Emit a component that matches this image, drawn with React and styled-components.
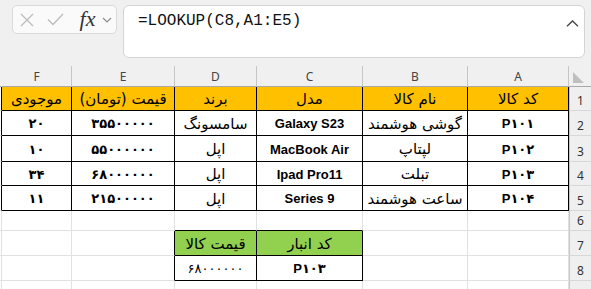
import styled, { createGlobalStyle } from "styled-components";

const GlobalStyle = createGlobalStyle`
  * { box-sizing: border-box; }
  body {
    margin: 0;
    background: #f0f0f0;
    overflow: hidden;
    font-family: "Liberation Sans", "DejaVu Sans", sans-serif;
  }
`;

const Page = styled.div`
  width: 591px;
  height: 289px;
  overflow: hidden;
  background: #f0f0f0;
`;

const TopBar = styled.div`
  height: 66px;
  display: flex;
  align-items: flex-start;
  gap: 6px;
  padding: 5px 6px 0 12px;
`;

const NameBox = styled.div`
  width: 105px;
  height: 29px;
  display: flex;
  align-items: center;
  padding-left: 6px;
  background: #fafafa;
  border: 1px solid #dadada;
  border-radius: 5px;
`;

const Slot = styled.div`
  width: ${(p) => p.$w}px;
  display: flex;
  justify-content: center;
  align-items: center;
`;

const Fx = styled.span`
  font-family: "Liberation Serif", serif;
  font-style: italic;
  font-size: 22px;
  line-height: 1;
  color: #333;
  margin-top: -2px;
`;

const FormulaBox = styled.div`
  flex: 1;
  height: 53px;
  display: flex;
  justify-content: space-between;
  align-items: flex-start;
  padding: 5px 5px 0 14px;
  background: #fff;
  border: 1px solid #d4d4d4;
  border-radius: 6px;
`;

const FormulaText = styled.div`
  font-family: "Liberation Mono", monospace;
  font-size: 16px;
  line-height: 20px;
  color: #111;
`;

const CollapseIcon = styled.svg`
  margin-top: 9px;
`;

const Sheet = styled.div`
  display: grid;
  grid-template-columns: 2px 70px 103px 82px 106px 105px 101px 22px;
  grid-template-rows: 21px 24px 25px 26px 24px 25px 20px 25px 25px 25px;
  direction: ltr;
`;

const ColHead = styled.div`
  display: flex;
  align-items: center;
  justify-content: center;
  background: #f0f0f0;
  border-right: 1px solid ${(p) => (p.$edge ? "transparent" : "#c6c6c6")};
  border-bottom: 1px solid #a8a8a8;
  font-family: "Noto Sans", sans-serif;
  font-size: 12px;
  color: #444;
`;

const Corner = styled.div`
  display: flex;
  align-items: flex-end;
  padding: 0 0 3px 4px;
  background: #f0f0f0;
  border-bottom: 1px solid #a8a8a8;
`;

const RowHead = styled.div`
  display: flex;
  align-items: flex-end;
  justify-content: center;
  padding-bottom: 3px;
  background: #efefef;
  border-left: 1px solid #c6c6c6;
  border-bottom: 1px solid #d8d8d8;
  font-family: "Noto Sans", sans-serif;
  font-size: 12px;
  line-height: 1;
  color: #333;
`;

const Cell = styled.div`
  display: flex;
  align-items: center;
  justify-content: center;
  padding-top: 1px;
  background: ${(p) => p.$fill || "#fff"};
  border-right: 1px solid ${(p) => (p.$rightDark ? "#000" : "#e1e1e1")};
  border-bottom: 1px solid ${(p) => (p.$bottomDark ? "#000" : "#e1e1e1")};
  font-family: ${(p) =>
    p.$fa ? `"DejaVu Sans", sans-serif` : `"Liberation Sans", "DejaVu Sans", sans-serif`};
  font-size: ${(p) => (p.$fa ? 15 : 13)}px;
  font-weight: ${(p) => (p.$bold ? 700 : 400)};
  color: #000;
  direction: rtl;
  white-space: nowrap;
  overflow: hidden;
`;

const letters = ["F", "E", "D", "C", "B", "A"];

// rows listed left-to-right as shown (F ... A)
const rows = [
  ["موجودی", "قیمت (تومان)", "برند", "مدل", "نام کالا", "کد کالا"],
  ["۲۰", "۳۵۵۰۰۰۰۰", "سامسونگ", "Galaxy S23", "گوشی هوشمند", "P۱۰۱"],
  ["۱۰", "۵۵۰۰۰۰۰۰", "اپل", "MacBook Air", "لپتاپ", "P۱۰۲"],
  ["۳۴", "۶۸۰۰۰۰۰۰", "اپل", "Ipad Pro11", "تبلت", "P۱۰۳"],
  ["۱۱", "۲۱۵۰۰۰۰۰", "اپل", "Series 9", "ساعت هوشمند", "P۱۰۴"],
  ["", "", "", "", "", ""],
  ["", "", "قیمت کالا", "کد انبار", "", ""],
  ["", "", "۶۸۰۰۰۰۰۰", "P۱۰۳", "", ""],
  ["", "", "", "", "", ""],
];

// boxed ranges: A1:F5 and C7:D8 (r, c are 0-based visual indexes)
const isBoxed = (r, c) => {
  if (c < 0 || c > 5 || r < 0) return false;
  if (r <= 4) return true;
  if ((r === 6 || r === 7) && (c === 2 || c === 3)) return true;
  return false;
};

const fillFor = (r, c) => {
  if (r === 0) return "#ffc000";
  if (r === 6 && (c === 2 || c === 3)) return "#92d050";
  return null;
};

// persian words (not digits / latin) get the bigger arabic face
const isWord = (text) => /[\u0600-\u06EF]/.test(text);

const isBold = (r, c, text) => {
  if (isWord(text)) return false;
  if (r === 7) return c === 3;
  return true;
};

const CrossIcon = () => (
  <svg width="14" height="14" viewBox="0 0 14 14">
    <path d="M1 1 L13 13 M13 1 L1 13" stroke="#bcbcbc" strokeWidth="1.3" fill="none" />
  </svg>
);

const CheckIcon = () => (
  <svg width="17" height="13" viewBox="0 0 17 13">
    <path d="M1 6.5 L6 11.5 L16 1" stroke="#bcbcbc" strokeWidth="1.3" fill="none" />
  </svg>
);

const SmallChevron = () => (
  <svg width="10" height="6" viewBox="0 0 10 6">
    <path d="M1 1 L5 5 L9 1" stroke="#8a8a8a" strokeWidth="1.1" fill="none" />
  </svg>
);

const App = () => {
  return (
    <Page>
      <GlobalStyle />
      <TopBar>
        <NameBox>
          <Slot $w={16}>
            <CrossIcon />
          </Slot>
          <Slot $w={40}>
            <CheckIcon />
          </Slot>
          <Slot $w={25}>
            <Fx>fx</Fx>
          </Slot>
          <Slot $w={14}>
            <SmallChevron />
          </Slot>
        </NameBox>
        <FormulaBox>
          <FormulaText>=LOOKUP(C8,A1:E5)</FormulaText>
          <CollapseIcon width="13" height="7" viewBox="0 0 13 7">
            <path d="M1 6.3 L6.5 1 L12 6.3" stroke="#444" strokeWidth="1.3" fill="none" />
          </CollapseIcon>
        </FormulaBox>
      </TopBar>

      <Sheet>
        <ColHead $edge />
        {letters.map((l) => (
          <ColHead key={l}>{l}</ColHead>
        ))}
        <Corner>
          <svg width="11" height="11" viewBox="0 0 11 11">
            <path d="M0 0 L0 11 L11 11 Z" fill="#bfbfbf" />
          </svg>
        </Corner>

        {rows.map((row, r) => [
          <Cell key={`e${r}`} $rightDark={isBoxed(r, 0)} />,
          ...row.map((text, c) => (
            <Cell
              key={`${r}-${c}`}
              $fill={fillFor(r, c)}
              $fa={isWord(text)}
              $bold={isBold(r, c, text)}
              $rightDark={isBoxed(r, c) || isBoxed(r, c + 1)}
              $bottomDark={isBoxed(r, c) || isBoxed(r + 1, c)}
            >
              {text}
            </Cell>
          )),
          <RowHead key={`h${r}`}>{r + 1}</RowHead>,
        ])}
      </Sheet>
    </Page>
  );
};

export default App;
